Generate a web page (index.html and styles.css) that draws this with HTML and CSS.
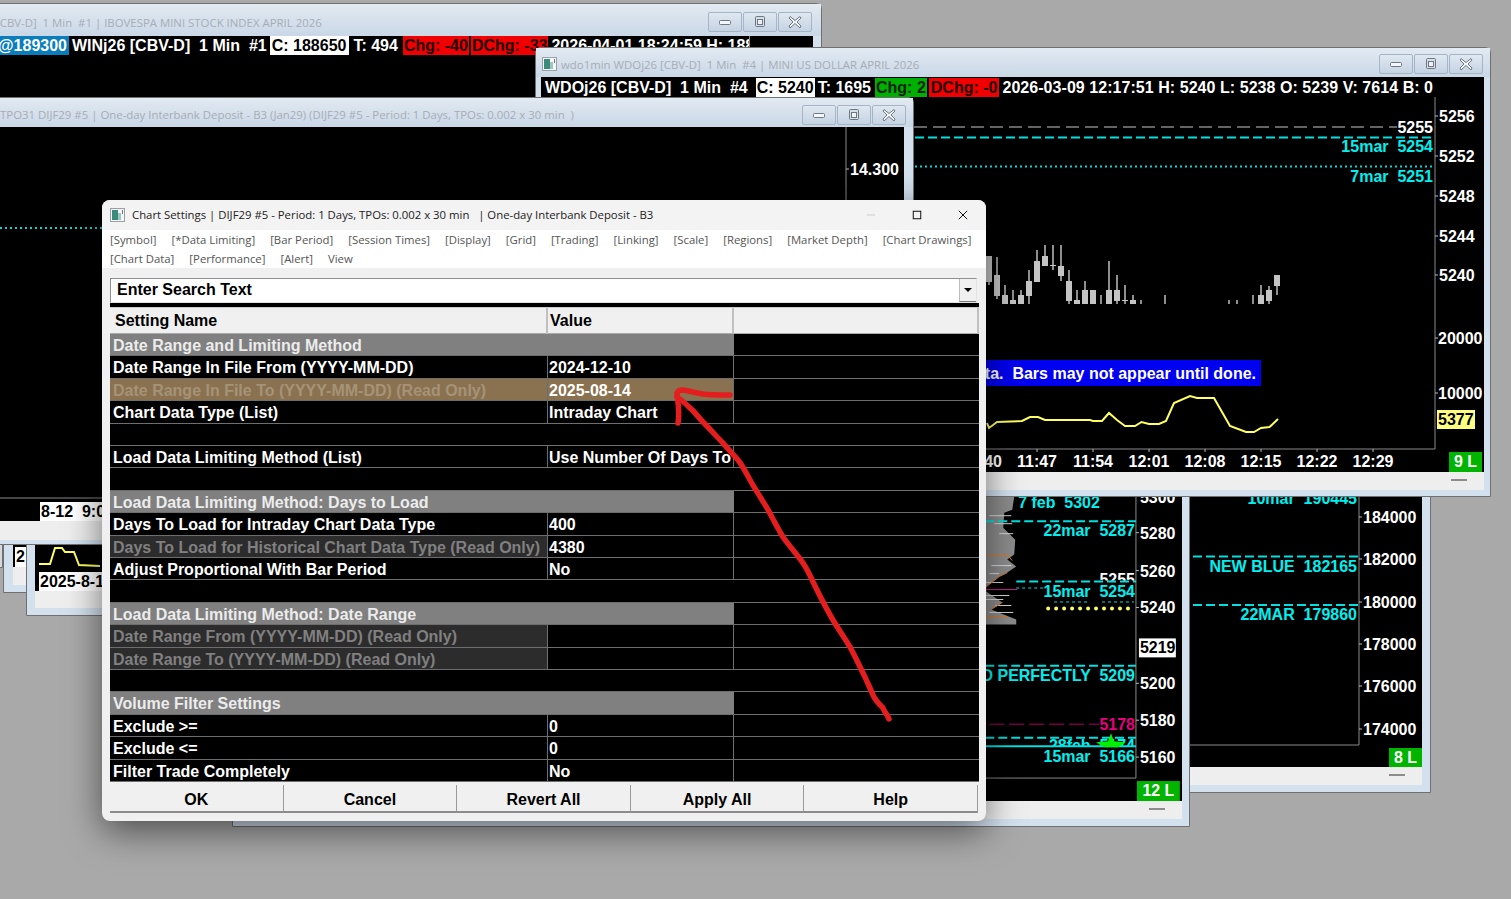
FILE: index.html
```html
<!DOCTYPE html>
<html lang="en">
<head>
<meta charset="utf-8">
<title>Chart Settings</title>
<link rel="stylesheet" href="styles.css">
</head>
<body>
<svg class="defs" width="0" height="0" aria-hidden="true">
  <symbol id="i-min" viewBox="0 0 14 14"><rect x="1.5" y="5.5" width="11" height="4" rx="1" fill="#f4f7fa" stroke="#6f7780"/></symbol>
  <symbol id="i-max" viewBox="0 0 14 14"><rect x="2.5" y="1.5" width="9" height="10" rx="1" fill="#d4dee8" stroke="#6f7780"/><rect x="4.5" y="4.5" width="5" height="5" fill="#eef2f6" stroke="#6f7780"/></symbol>
  <symbol id="i-x" viewBox="0 0 14 14"><path d="M2 1.5 7 5.5 12 1.5 13 3 9 7 13 11 12 13 7 8.500 2 13 1 11 5 7 1 3Z" fill="#f4f7fa" stroke="#6f7780"/></symbol>
  <symbol id="i-app" viewBox="0 0 15 14"><rect x=".5" y=".5" width="14" height="13" fill="#f3f5f6" stroke="#9aa0a5"/><rect x="2" y="2" width="6" height="10" fill="#3c8a7c"/><rect x="8" y="5" width="3" height="7" fill="#9fc6bd"/><rect x="12" y="2" width="1" height="4" fill="#777"/></symbol>
</svg>

<main class="desktop">

  <!-- IBOVESPA window -->
  <section class="win win-bov">
    <header class="win-title">
      <span class="win-name">[CBV-D]  1 Min  #1 | IBOVESPA MINI STOCK INDEX APRIL 2026</span>
      <div class="win-btns">
        <span class="wb"><svg><use href="#i-min"/></svg></span>
        <span class="wb"><svg><use href="#i-max"/></svg></span>
        <span class="wb"><svg><use href="#i-x"/></svg></span>
      </div>
    </header>
    <div class="win-body">
      <div class="quote quote-bov">
        <span class="q-blue">@189300</span>
        <span>WINj26 [CBV-D]  1 Min  #1</span>
        <span class="q-white">C: 188650</span>
        <span>T: 494</span>
        <span class="q-red">Chg: -40</span>
        <span class="q-red">DChg: -33</span>
        <span>2026-04-01 18:24:59 H: 188700</span>
      </div>
    </div>
  </section>

  <!-- 8 L window -->
  <section class="win win-eight">
    <div class="win-body">
      <svg class="chart" viewBox="908 400 514 367">
        <text class="t cy end" x="1357" y="504">10mar  190445</text>
        <path class="ln-axis" d="M1359 400V745H908"/>
        <path class="ln-dash" d="M1193 556.500H1359M1193 605H1359"/>
        <text class="t cy end" x="1357" y="572">NEW BLUE  182165</text>
        <text class="t cy end" x="1357" y="620">22MAR  179860</text>
        <path class="ln-tick" d="M1359 517h3M1359 559h3M1359 602h3M1359 644h3M1359 686h3M1359 729h3"/>
        <text class="t wh" x="1363" y="523">184000</text>
        <text class="t wh" x="1363" y="565">182000</text>
        <text class="t wh" x="1363" y="608">180000</text>
        <text class="t wh" x="1363" y="650">178000</text>
        <text class="t wh" x="1363" y="692">176000</text>
        <text class="t wh" x="1363" y="735">174000</text>
        <rect class="fill-green" x="1389" y="748" width="33" height="19"/>
        <text class="t wh mid" x="1405.500" y="763">8 L</text>
      </svg>
    </div>
    <div class="win-strip"><i class="grip"></i></div>
  </section>

  <!-- 12 L window -->
  <section class="win win-twelve">
    <div class="win-body">
      <svg class="chart" viewBox="240 400 942 402">
        <path class="profile" d="M986 497H1015L1013 510 1005 513 1004 528 1016 540 1015 555 1008 560 1017 567 1008 573 1000 577 987 587V592L1003 603 992 610 1017 620V625H986Z"/>
        <path class="profile-gap" d="M990 516h22M995 524h18M1000 534h14M992 566h20M990 574h10M986 583h18M986 596h24M986 600h18M996 606h16M990 613h24"/>
        <path class="profile-edge" d="M986 556H1009L1013 561M986 618H1008M986 588 1000 577 1008 573M1003 603 992 610"/>
        <path class="ln-pink" d="M986 590H1018"/>
        <text class="t cy" x="1019" y="508">7 feb  5302</text>
        <path class="ln-axis" d="M1137 400V779H240"/>
        <path class="ln-dash" d="M986 521.500H1137M1017 582H1137M986 666.500H1137M986 738.500H1137"/>
        <text class="t wh end" x="1136" y="585" clip-path="url(#clip5255)">5255</text>
        <clipPath id="clip5255"><rect x="1090" y="570" width="50" height="11"/></clipPath>
        <text class="t cy end" x="1136" y="536">22mar  5287</text>
        <path class="ln-dots-c" d="M1017 588.500H1045M1055 602.500H1090M1103 602.500H1135"/>
        <text class="t cy end" x="1136" y="598">15mar  5254</text>
        <path class="ln-dots-y" d="M1049 609H1134"/>
        <text class="t cy end" x="1136" y="682">LOADED PERFECTLY  5209</text>
        <path class="ln-pink-d" d="M990 725H1100"/>
        <text class="t pk end" x="1136" y="731">5178</text>
        <text class="t cy end" x="1136" y="752" clip-path="url(#clip28)">28feb  5174</text>
        <clipPath id="clip28"><rect x="1040" y="735" width="100" height="12"/></clipPath>
        <path class="ln-solid" d="M986 747H1137"/>
        <path class="star" d="M1112 734 1115 742 1127 743 1119 748H1105L1097 743 1109 742Z"/>
        <text class="t cy end" x="1136" y="763">15mar  5166</text>
        <path class="ln-tick" d="M1137 533h3M1137 571h3M1137 608h3M1137 684h3M1137 721h3M1137 758h3"/>
        <text class="t wh" x="1141" y="503">5300</text>
        <text class="t wh" x="1141" y="539">5280</text>
        <text class="t wh" x="1141" y="577">5260</text>
        <text class="t wh" x="1141" y="614">5240</text>
        <rect class="fill-white" x="1140" y="639" width="37" height="19"/>
        <text class="t bk" x="1141" y="654">5219</text>
        <text class="t wh" x="1141" y="690">5200</text>
        <text class="t wh" x="1141" y="727">5180</text>
        <text class="t wh" x="1141" y="764">5160</text>
        <rect class="fill-green" x="1138" y="782" width="43" height="20"/>
        <text class="t wh mid" x="1159.500" y="797">12 L</text>
      </svg>
    </div>
    <div class="win-strip"><i class="grip"></i></div>
  </section>

  <!-- Small cascaded windows, lower left -->
  <section class="win win-sliver"></section>
  <section class="win win-small-a">
    <div class="win-body">
      <span class="date-box date-a">2</span>
    </div>
    <div class="win-strip"></div>
  </section>
  <section class="win win-small-b">
    <div class="win-body">
      <svg class="chart" viewBox="35 501 382 90">
        <polyline class="ln-vol" points="39,564 50,564 55,548 62,548 65,552 74,552 79,565 100,566"/>
      </svg>
      <span class="date-box date-b">2025-8-14</span>
    </div>
    <div class="win-strip"></div>
  </section>

  <!-- WDO window -->
  <section class="win win-wdo">
    <header class="win-title">
      <svg class="win-icon"><use href="#i-app"/></svg>
      <span class="win-name">wdo1min WDOj26 [CBV-D]  1 Min  #4 | MINI US DOLLAR APRIL 2026</span>
      <div class="win-btns">
        <span class="wb"><svg><use href="#i-min"/></svg></span>
        <span class="wb"><svg><use href="#i-max"/></svg></span>
        <span class="wb"><svg><use href="#i-x"/></svg></span>
      </div>
    </header>
    <div class="win-body">
      <svg class="chart" viewBox="541 77 943 395">
        <path class="ln-axis" d="M1435 97V449H541"/>
        <path class="ln-white-d" d="M914 127H1397"/>
        <text class="t wh end" x="1433" y="133">5255</text>
        <path class="ln-dash" d="M915 137.500H1435"/>
        <text class="t cy end" x="1433" y="152">15mar  5254</text>
        <path class="ln-dots-t" d="M915 166.500H1435"/>
        <text class="t cy end" x="1433" y="182">7mar  5251</text>
        <path class="wick" d="M989 256V285M997 257V299M1005 285V304M1013 290V304M1021 290V304M1029 270V304M1037 250V282M1045 245V266M1053 245V270M1061 245V281M1069 270V304M1077 290V304M1085 281V304M1093 290V304M1101 295V304M1109 261V304M1117 275V304M1125 285V304M1133 295V304M1141 300V304M1165 295V304M1229 300V304M1237 300V304M1253 295V304M1261 285V304M1269 286V304M1277 275V295"/>
        <path class="body-c" d="M986 256H992V282H986ZM994 275H1000V296H994ZM1002 295H1008V304H1002ZM1010 300H1016V304H1010ZM1018 295H1024V304H1018ZM1026 281H1032V296H1026ZM1034 261H1040V282H1034ZM1042 256H1048V266H1042ZM1050 265H1056V266H1050ZM1058 266H1064V276H1058ZM1066 281H1072V301H1066ZM1074 300H1080V304H1074ZM1082 290H1088V304H1082ZM1090 290H1096V304H1090ZM1106 290H1112V304H1106ZM1114 290H1120V301H1114ZM1122 300H1128V301H1122ZM1130 300H1136V304H1130ZM1258 295H1264V304H1258ZM1266 290H1272V301H1266ZM1274 275H1280V286H1274Z"/>
        <rect class="fill-blue" x="986" y="360" width="275" height="26"/>
        <text class="t wh banner" x="1256" y="379">Please wait for data.  Bars may not appear until done.</text>
        <polyline class="ln-vol" points="987,423 989,428 997,422 1022,421 1030,417 1038,417 1045,420 1090,420 1093,421 1102,421 1109,413 1117,420 1125,426 1135,426 1141.500,422 1149,424 1159,424 1166,421 1174,403 1190,396 1197,398 1214,398 1230,426 1246,432 1254,432 1261,428 1269.500,427 1278,419"/>
        <path class="ln-tick" d="M1435 116h3M1435 156h3M1435 196h3M1435 236h3M1435 275h3M1435 338h3M1435 393h3M1037 449v3M1093 449v3M1149 449v3M1205 449v3M1261 449v3M1317 449v3M1373 449v3"/>
        <text class="t wh" x="1439" y="122">5256</text>
        <text class="t wh" x="1439" y="162">5252</text>
        <text class="t wh" x="1439" y="202">5248</text>
        <text class="t wh" x="1439" y="242">5244</text>
        <text class="t wh" x="1439" y="281">5240</text>
        <text class="t wh" x="1438" y="344">20000</text>
        <text class="t wh" x="1438" y="399">10000</text>
        <rect class="fill-yellow" x="1437" y="410" width="38" height="19"/>
        <text class="t bk" x="1438" y="425">5377</text>
        <text class="t wh end" x="1002" y="467">11:40</text>
        <text class="t wh mid" x="1037" y="467">11:47</text>
        <text class="t wh mid" x="1093" y="467">11:54</text>
        <text class="t wh mid" x="1149" y="467">12:01</text>
        <text class="t wh mid" x="1205" y="467">12:08</text>
        <text class="t wh mid" x="1261" y="467">12:15</text>
        <text class="t wh mid" x="1317" y="467">12:22</text>
        <text class="t wh mid" x="1373" y="467">12:29</text>
        <rect class="fill-green" x="1449" y="452" width="33" height="20"/>
        <text class="t wh mid" x="1465.500" y="467">9 L</text>
      </svg>
      <div class="quote quote-wdo">
        <span>WDOj26 [CBV-D]  1 Min  #4</span>
        <span class="q-white">C: 5240</span>
        <span>T: 1695</span>
        <span class="q-green">Chg: 2</span>
        <span class="q-red">DChg: -0</span>
        <span>2026-03-09 12:17:51 H: 5240 L: 5238 O: 5239 V: 7614 B: 0</span>
      </div>
    </div>
    <div class="win-strip"><i class="grip"></i></div>
  </section>

  <!-- TPO window -->
  <section class="win win-tpo">
    <header class="win-title">
      <span class="win-name">TPO31 DIJF29 #5 | One-day Interbank Deposit - B3 (Jan29) (DIJF29 #5 - Period: 1 Days, TPOs: 0.002 x 30 min  )</span>
      <div class="win-btns">
        <span class="wb"><svg><use href="#i-min"/></svg></span>
        <span class="wb"><svg><use href="#i-max"/></svg></span>
        <span class="wb"><svg><use href="#i-x"/></svg></span>
      </div>
    </header>
    <div class="win-body">
      <svg class="chart" viewBox="0 127 904 394">
        <path class="ln-axis" d="M846 127V498H0"/>
        <path class="ln-tick" d="M846 169h3"/>
        <path class="ln-dots-t" d="M0 228H102"/>
        <text class="t wh" x="850" y="175">14.300</text>
      </svg>
      <span class="date-box date-tpo">8-12  9:00</span>
    </div>
    <div class="win-strip"></div>
  </section>

  <!-- Chart Settings dialog -->
  <section class="dialog">
    <header class="dlg-title">
      <svg class="dlg-icon"><use href="#i-app"/></svg>
      <span class="dlg-name">Chart Settings | DIJF29 #5 - Period: 1 Days, TPOs: 0.002 x 30 min   | One-day Interbank Deposit - B3</span>
      <div class="dlg-ctrls">
        <svg class="ctl" viewBox="0 0 12 12"><path class="ctl-min" d="M1 6H11"/></svg>
        <svg class="ctl" viewBox="0 0 12 12"><rect class="ctl-ln" x="1.500" y="1.500" width="9" height="9"/></svg>
        <svg class="ctl" viewBox="0 0 12 12"><path class="ctl-ln" d="M1 1 11 11M11 1 1 11"/></svg>
      </div>
    </header>
    <nav class="tabs">
      <a>[Symbol]</a><a>[*Data Limiting]</a><a>[Bar Period]</a><a>[Session Times]</a><a>[Display]</a><a>[Grid]</a><a>[Trading]</a><a>[Linking]</a><a>[Scale]</a><a>[Regions]</a><a>[Market Depth]</a><a>[Chart Drawings]</a><a>[Chart Data]</a><a>[Performance]</a><a>[Alert]</a><a>View</a>
    </nav>
    <div class="dlg-content">
      <div class="search">
        <span class="search-text">Enter Search Text</span>
        <span class="search-drop"><svg viewBox="0 0 8 4"><path d="M0 0H8L4 4Z"/></svg></span>
      </div>
      <div class="grid">
        <div class="grid-head"><span>Setting Name</span><span>Value</span><span></span></div>
        <div class="grid-rows">
          <div class="row sec"><span>Date Range and Limiting Method</span><span></span><span></span></div>
          <div class="row"><span>Date Range In File From (YYYY-MM-DD)</span><span>2024-12-10</span><span></span></div>
          <div class="row hl"><span>Date Range In File To (YYYY-MM-DD) (Read Only)</span><span>2025-08-14</span><span></span></div>
          <div class="row"><span>Chart Data Type (List)</span><span>Intraday Chart</span><span></span></div>
          <div class="row blank"></div>
          <div class="row"><span>Load Data Limiting Method (List)</span><span>Use Number Of Days To Load</span><span></span></div>
          <div class="row blank"></div>
          <div class="row sec"><span>Load Data Limiting Method: Days to Load</span><span></span><span></span></div>
          <div class="row"><span>Days To Load for Intraday Chart Data Type</span><span>400</span><span></span></div>
          <div class="row ro"><span>Days To Load for Historical Chart Data Type (Read Only)</span><span>4380</span><span></span></div>
          <div class="row"><span>Adjust Proportional With Bar Period</span><span>No</span><span></span></div>
          <div class="row blank"></div>
          <div class="row sec"><span>Load Data Limiting Method: Date Range</span><span></span><span></span></div>
          <div class="row ro"><span>Date Range From (YYYY-MM-DD) (Read Only)</span><span></span><span></span></div>
          <div class="row ro"><span>Date Range To (YYYY-MM-DD) (Read Only)</span><span></span><span></span></div>
          <div class="row blank"></div>
          <div class="row sec"><span>Volume Filter Settings</span><span></span><span></span></div>
          <div class="row"><span>Exclude &gt;=</span><span>0</span><span></span></div>
          <div class="row"><span>Exclude &lt;=</span><span>0</span><span></span></div>
          <div class="row"><span>Filter Trade Completely</span><span>No</span><span></span></div>
        </div>
      </div>
      <div class="actions">
        <button>OK</button><button>Cancel</button><button>Revert All</button><button>Apply All</button><button>Help</button>
      </div>
    </div>
  </section>

  <!-- Hand-drawn annotation -->
  <svg class="annotation" viewBox="0 0 1511 899" aria-hidden="true">
    <path d="M889 719C887 714 884 711 883 708C878 703 875 700 873 695C871 690 868 684 865 677C860 667 856 658 850 647C844 637 839 630 833 620C827 610 822 600 817 590C812 580 809 572 803 563C797 554 790 547 783 537C777 527 772 517 767 508C761 498 755 489 750 480C746 473 743 466 738 460C733 454 728 449 723 443C716 436 710 429 703 422C698 417 695 412 690 408C686 404 682 400 677 397"/>
    <path d="M678 423C680 414 678 403 677 393C679 390 680 390 683 390C690 391 696 393 703 394C712 395 721 395 730 395"/>
  </svg>
</main>
</body>
</html>
```
FILE: styles.css
```css
* { box-sizing: border-box; }
html, body { margin: 0; padding: 0; overflow: hidden; }
body { font-family: "Liberation Sans", Arial, sans-serif; background: #a9a9a9; }
.defs { position: absolute; }
.desktop { position: relative; width: 1511px; height: 899px; overflow: hidden; background: #a9a9a9; }

/* Desktop windows */
.win {
  position: absolute;
  display: flex;
  flex-direction: column;
  border: 1px solid #707070;
  border-radius: 6px 6px 0 0;
  background: #d3e1ef;
}
.win-title {
  flex: none;
  display: flex;
  align-items: center;
  height: 29px;
  background: linear-gradient(#e2eaf2, #c9d7e6);
  color: #a6adb5;
  font: 11.4px "Open Sans", sans-serif;
  white-space: pre;
}
.win-name { flex: 1; overflow: hidden; }
.win-icon { flex: none; width: 15px; height: 14px; margin-right: 4px; }
.win-btns { flex: none; display: flex; gap: 1px; }
.wb {
  display: flex;
  align-items: center;
  justify-content: center;
  width: 34px;
  height: 20px;
  border: 1px solid #a6b5c6;
  border-radius: 2px;
  background: linear-gradient(#dfe8f1, #c5d3e3);
}
.wb svg { width: 14px; height: 14px; }
.win-body { position: relative; flex: 1; min-height: 0; background: #000; overflow: hidden; }
.win-strip { position: relative; flex: none; height: 18px; background: #eeeeee; }
.grip { position: absolute; top: 7px; right: 17px; width: 16px; height: 2px; background: #8c8c8c; }
.chart { display: block; width: 100%; height: 100%; }

.win-bov { left: -10px; top: 3px; width: 832px; height: 200px; padding: 0 8px 7px 9px; z-index: 1; }
.win-bov .win-title { margin: 0 -8px 0 -9px; padding: 4px 9px 0 5px; height: 32px; }

.win-eight { left: 900px; top: 399px; width: 531px; height: 394px; padding: 0 8px 7px 7px; z-index: 2; }
.win-twelve { left: 232px; top: 399px; width: 958px; height: 428px; padding: 0 7px 7px; z-index: 3; }
.win-sliver { left: -100px; top: 530px; width: 103px; height: 38px; background: #d5d8dc; z-index: 2; }
.win-small-a { left: 3px; top: 500px; width: 300px; height: 93px; padding: 0 9px 7px; z-index: 2; }
.win-small-b { left: 26px; top: 500px; width: 400px; height: 116px; padding: 0 8px 7px; z-index: 2; }
.win-small-b .win-strip { height: 17px; }

.win-wdo { left: 535px; top: 47px; width: 956px; height: 450px; padding: 0 6px 6px 5px; z-index: 4; }
.win-wdo .win-title { margin: 0 -6px 0 -5px; padding: 3px 7px 0 6px; }

.win-tpo { left: -10px; top: 97px; width: 924px; height: 448px; padding: 0 9px 4px 9px; z-index: 5; }
.win-tpo .win-title { margin: 0 -9px; padding: 4px 7px 0 9px; }
.win-tpo .win-strip { height: 19px; }

/* Quote rows */
.quote {
  position: absolute;
  top: 1px;
  display: flex;
  gap: 2px;
  color: #fff;
  font: bold 16px/19px "Liberation Sans", sans-serif;
  white-space: pre;
  overflow: hidden;
}
.quote span { flex: none; padding: 0 1px; }
.quote-bov { top: 0; left: 0; width: 750px; border-right: 1px solid #888; }
.quote-bov .q-blue { margin-left: -2px; padding: 0; width: 71px; }
.quote-bov .q-white { padding: 0 3px 0 2px; margin-right: 1px; }
.quote-bov .q-red:nth-child(5) { margin-left: 2px; }
.quote-wdo { left: 3px; width: 892px; }
.quote-wdo span:nth-child(1) { padding-right: 6px; }
.quote-wdo span:nth-child(3) { padding-right: 2px; }
.quote-wdo span:nth-child(5) { padding: 0 2px; }
.quote-wdo span:nth-child(6) { letter-spacing: .05px; }
.q-blue { background: #0a7dbd; }
.q-white { background: #fff; color: #000; }
.q-red { background: #f00000; color: #200; }
.q-green { background: #00b000; color: #020; }

/* Date boxes */
.date-box {
  position: absolute;
  bottom: 0;
  height: 19px;
  padding: 0 1px;
  background: #fff;
  color: #000;
  font: bold 16px/19px "Liberation Sans", sans-serif;
  white-space: pre;
  overflow: hidden;
}
.date-tpo { left: 40px; width: 70px; }
.date-a { left: 2px; width: 20px; height: 20px; }
.date-b { left: 4px; width: 90px; }

/* Chart drawing */
.t { font: bold 16px "Liberation Sans", sans-serif; white-space: pre; }
.wh { fill: #fff; }
.bk { fill: #000; }
.cy { fill: #00f0f0; }
.pk { fill: #e6007e; }
.end { text-anchor: end; }
.mid { text-anchor: middle; }
.banner { text-anchor: end; }
.fill-green { fill: #00b400; }
.fill-white { fill: #fff; }
.fill-yellow { fill: #ffff80; }
.fill-blue { fill: #0000f0; }
.ln-axis { fill: none; stroke: #8a8a8a; stroke-width: 1; }
.ln-tick { fill: none; stroke: #bbb; stroke-width: 1; }
.ln-dash { fill: none; stroke: #00e0e0; stroke-width: 2; stroke-dasharray: 9 4; }
.ln-white-d { fill: none; stroke: #c8c8c8; stroke-width: 1; stroke-dasharray: 13 6; }
.ln-dots-t { fill: none; stroke: #00d8d8; stroke-width: 2; stroke-dasharray: 2 3; }
.ln-dots-c { fill: none; stroke: #00e0e0; stroke-width: 1; stroke-dasharray: 3 3; }
.ln-dots-y { fill: none; stroke: #ffff60; stroke-width: 4; stroke-linecap: round; stroke-dasharray: 0 8; }
.ln-pink { fill: none; stroke: #c8208a; stroke-width: 1; }
.ln-pink-d { fill: none; stroke: #b00060; stroke-width: 1; stroke-dasharray: 15 5; }
.ln-solid { fill: none; stroke: #00e0e0; stroke-width: 2; }
.ln-vol { fill: none; stroke: #ffff60; stroke-width: 2; }
.wick { fill: none; stroke: #8f8f8f; stroke-width: 2; }
.body-c { fill: #c4c4c4; }
.profile { fill: #8c8c8c; }
.profile-gap { fill: none; stroke: #d8d8d8; stroke-width: 1; }
.profile-edge { fill: none; stroke: #e07820; stroke-width: 1; }
.star { fill: #00f000; }

/* Dialog */
.dialog {
  position: absolute;
  left: 102px;
  top: 200px;
  width: 884px;
  height: 621px;
  display: flex;
  flex-direction: column;
  border-radius: 8px;
  overflow: hidden;
  background: #f0f0f0;
  box-shadow: 0 10px 36px rgba(0, 0, 0, .55);
  z-index: 10;
}
.dlg-title {
  flex: none;
  display: flex;
  align-items: center;
  height: 30px;
  padding: 0 0 1px 8px;
  background: #f3f3f3;
  color: #222;
  font: 11.35px "Open Sans", sans-serif;
  white-space: pre;
}
.dlg-icon { flex: none; width: 15px; height: 14px; margin-right: 7px; }
.dlg-name { flex: 1; }
.dlg-ctrls { flex: none; display: flex; gap: 36px; padding-right: 18px; }
.ctl { width: 10px; height: 10px; }
.ctl-min { fill: none; stroke: #c4c4c4; stroke-width: 1; }
.ctl-ln { fill: none; stroke: #111; stroke-width: 1.2; }
.tabs {
  flex: none;
  display: flex;
  flex-wrap: wrap;
  align-content: flex-start;
  gap: 0 15px;
  height: 38px;
  padding: 0 8px;
  background: #fff;
  color: #555;
  font: 11.35px/19px "Open Sans", sans-serif;
  white-space: nowrap;
}
.dlg-content { flex: 1; display: flex; flex-direction: column; padding: 10px 7px 0 8px; }
.search {
  flex: none;
  display: flex;
  align-items: center;
  justify-content: space-between;
  height: 25px;
  margin-right: 2px;
  padding-left: 6px;
  background: #fff;
  border: 1px solid #909090;
  border-color: #909090 #e4e4e4 #e4e4e4 #909090;
  font: bold 16px "Liberation Sans", sans-serif;
  color: #000;
}
.search-text { margin-top: -2px; }
.search-drop {
  display: flex;
  align-items: center;
  justify-content: center;
  width: 17px;
  height: 23px;
  background: #f0f0f0;
  border-left: 1px solid #bbb;
  border-bottom: 1px solid #777;
}
.search-drop svg { width: 8px; height: 4px; }
.grid { flex: none; border-top: 4px solid #000; }
.grid-head {
  display: grid;
  grid-template-columns: 438px 186px 245px;
  height: 27px;
  background: #f0f0f0;
  border-top: 1px solid #ccc;
  border-bottom: 1px solid #aaa;
  font: bold 16px/26px "Liberation Sans", sans-serif;
  color: #000;
}
.grid-head span { padding-left: 5px; border-right: 2px solid #c0c0c0; }
.grid-head span + span { padding-left: 2px; }
.grid-rows { display: grid; grid-template-rows: repeat(20, 1fr); height: 448px; }
.row {
  display: grid;
  grid-template-columns: 438px 186px 245px;
  min-height: 0;
  background: #000;
  border-bottom: 1px solid #6e6e6e;
  color: #fff;
  font: bold 16px/23px "Liberation Sans", sans-serif;
  white-space: pre;
}
.row span { padding-left: 3px; overflow: hidden; border-right: 1px solid #6e6e6e; }
.row span + span { padding-left: 1px; }
.row span:last-child { border-right: 0; }
.sec { color: #ececec; }
.sec span:nth-child(1), .sec span:nth-child(2) { background: #808080; border-right: 0; }
.hl span:nth-child(1), .hl span:nth-child(2) { background: #8a7150; }
.hl span:nth-child(1) { color: #a59377; }
.ro span:nth-child(1) { background: #2c2c2c; color: #808080; }
.actions { flex: none; display: grid; grid-template-columns: repeat(5, 1fr); width: 868px; height: 28px; margin-top: 3px; }
.actions button {
  margin: 0;
  padding: 3px 0 0;
  background: #f0f0f0;
  border: 0;
  border-right: 1px solid #999;
  border-bottom: 2px solid #8c8c8c;
  color: #000;
  font: bold 16px "Liberation Sans", sans-serif;
}

/* Annotation */
.annotation { position: absolute; inset: 0; width: 1511px; height: 899px; z-index: 20; pointer-events: none; }
.annotation path { fill: none; stroke: #e41e1e; stroke-width: 5.5; stroke-linecap: round; stroke-linejoin: round; }
```
